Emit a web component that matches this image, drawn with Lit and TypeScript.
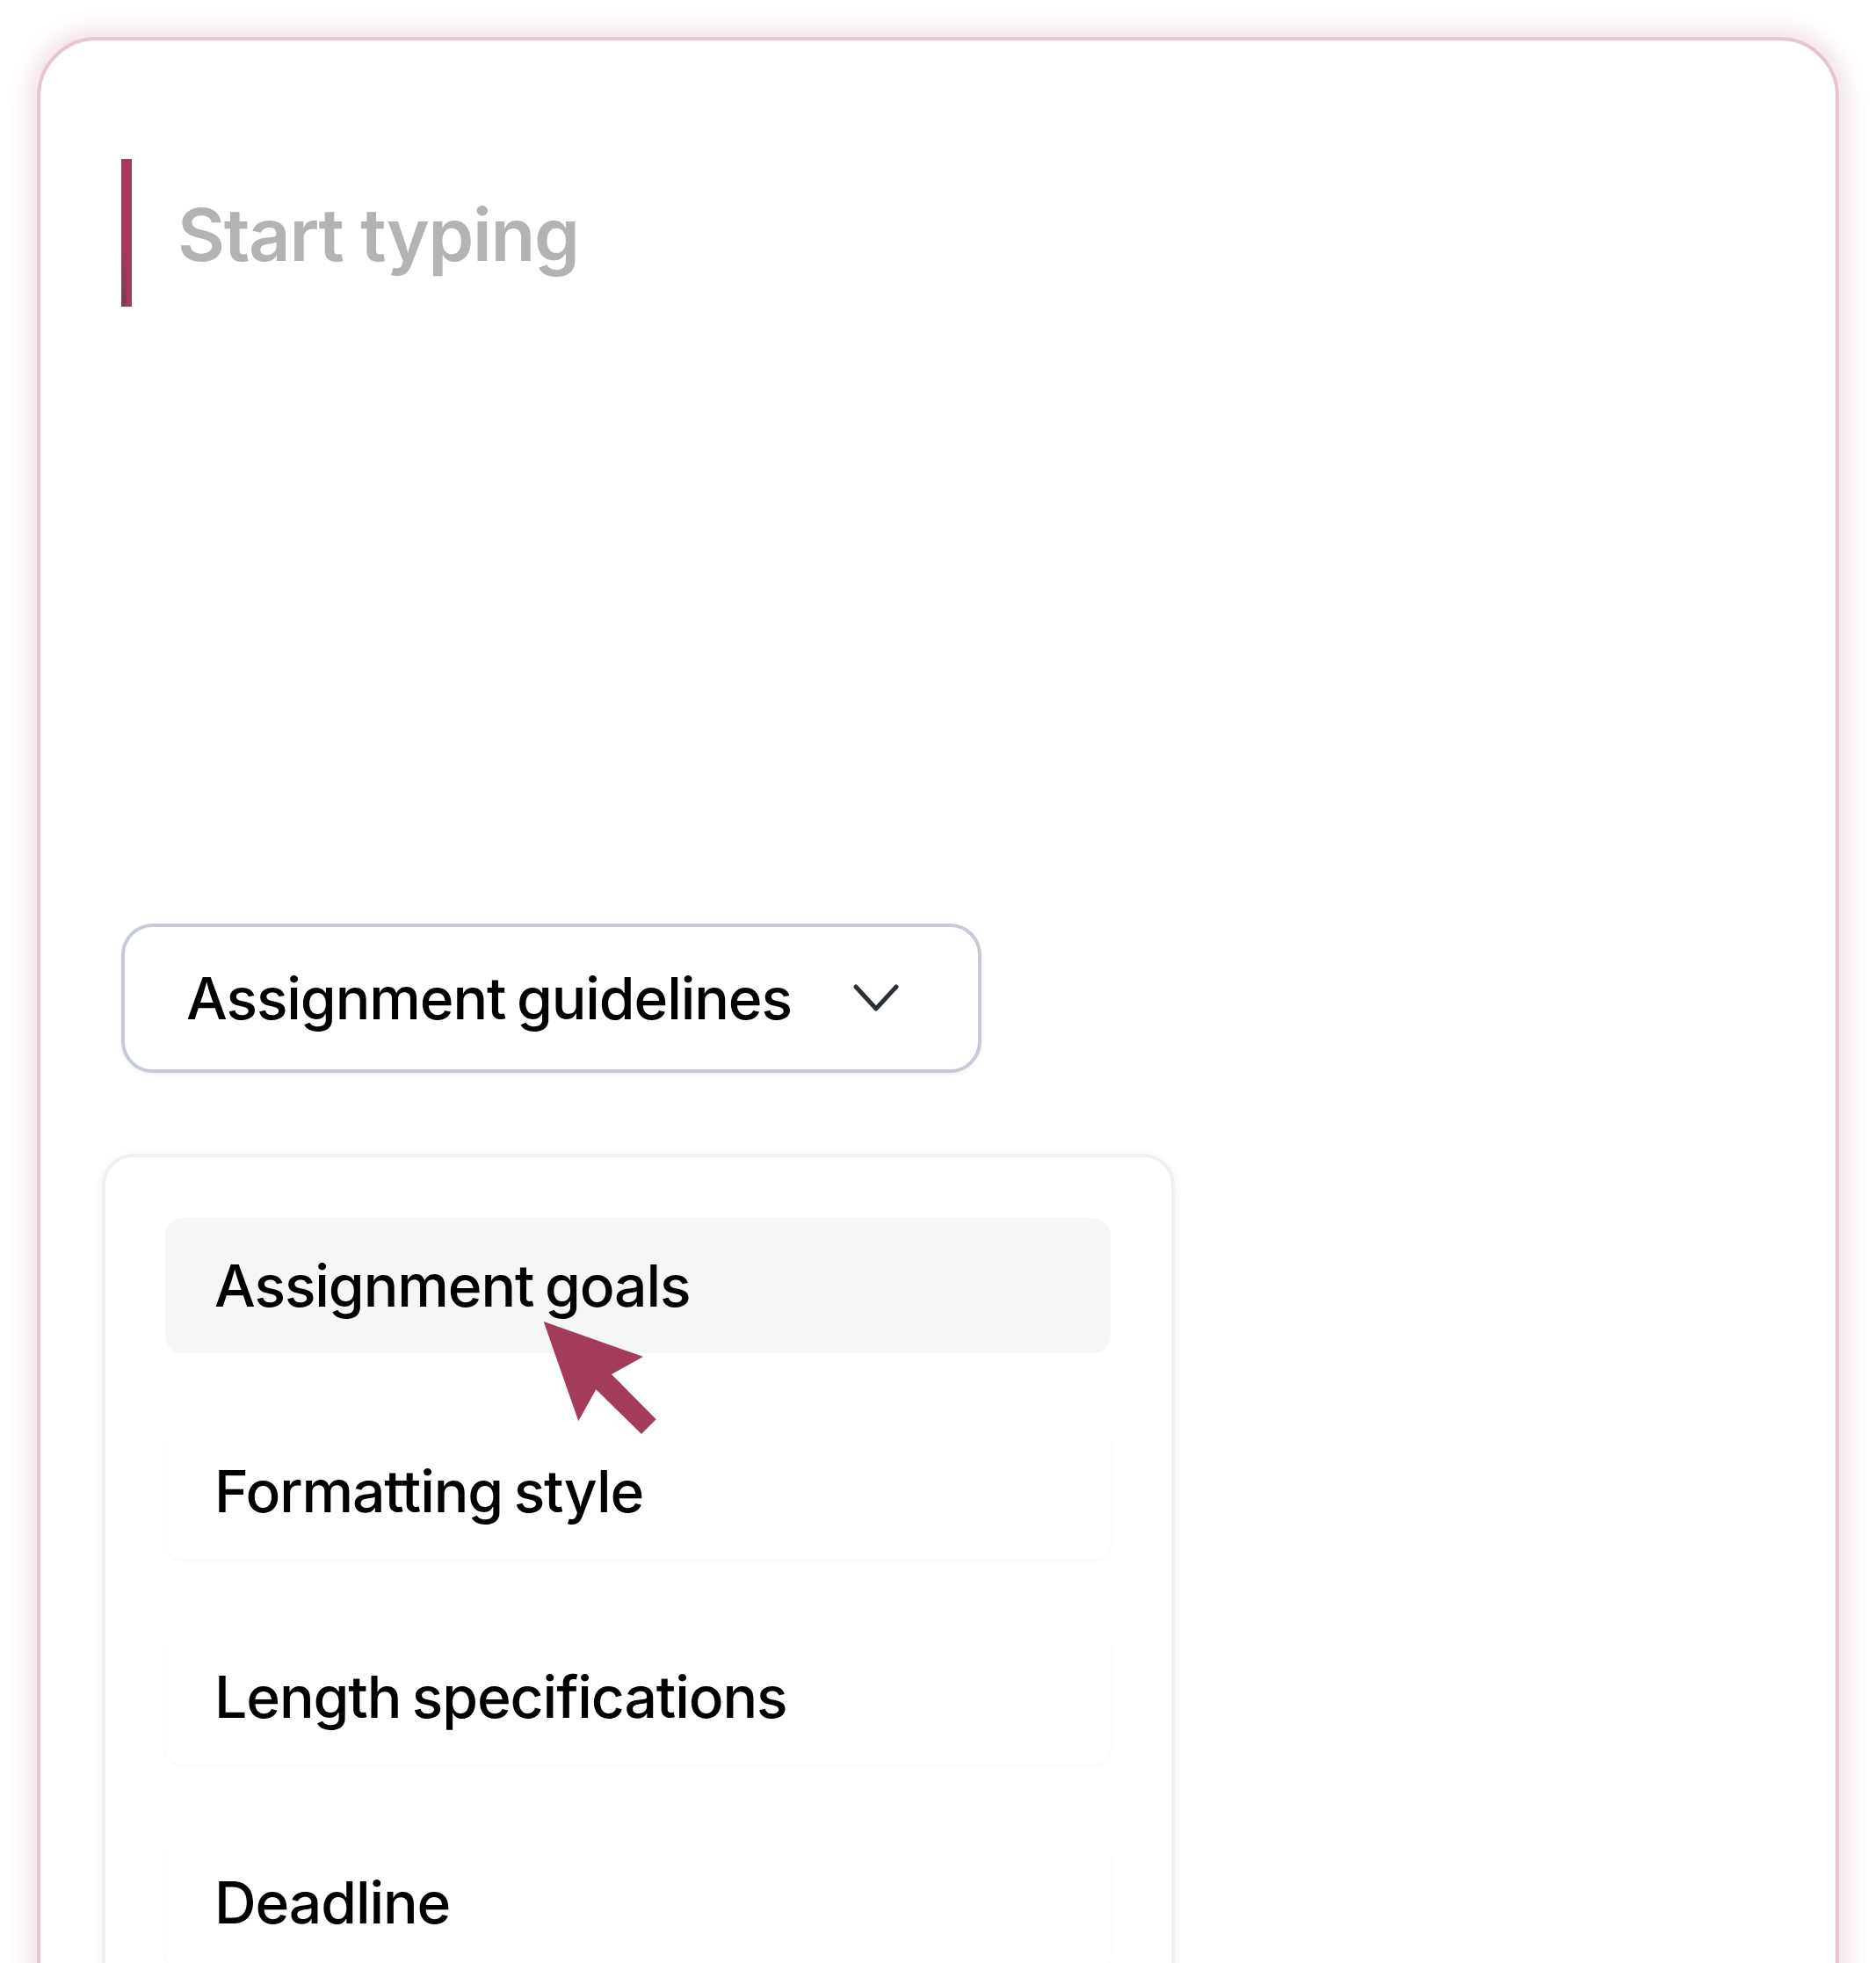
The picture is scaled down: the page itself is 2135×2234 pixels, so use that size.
import { LitElement, html, css, svg } from "lit";
import { customElement } from "lit/decorators.js";

@customElement("app-root")
export class AppRoot extends LitElement {
  static styles = css`
    :host { display: block; width: 2135px; height: 2234px; overflow: hidden; background: #fff; font-family: Inter, "Liberation Sans", sans-serif; position: relative; }
    .page { padding: 42px 42px 0; box-sizing: border-box; height: 2234px; }
    .panel { box-sizing: border-box; height: 2400px; border: 4px solid #e6c5d0; border-radius: 68px; background: #fff;
      box-shadow: 0 0 24px 10px rgba(163, 60, 90, 0.14); padding: 135px 92px 0; }
    .editor { display: flex; align-items: center; gap: 52px; height: 168px; margin-bottom: 702px; }
    .caret { width: 12px; height: 168px; flex: none; background: linear-gradient(to top, rgba(70,70,70,.5), rgba(70,70,70,0) 40%) left / 6px 100% no-repeat, #a33c5a; }
    .placeholder { font-size: 83px; font-weight: 600; color: #b3b3b3; line-height: 1; letter-spacing: -1.3px; padding-top: 4px; }
    .select { box-sizing: border-box; width: 979px; height: 170px; border: 4px solid #c5ccd8; border-radius: 36px; display: flex; align-items: center; justify-content: space-between; padding: 0 90px 0 70px; font-size: 66px; font-weight: 500; color: #000; letter-spacing: -1.1px; word-spacing: -4px; box-shadow: 0 2px 4px rgba(60,70,90,.08); }
    .select svg { width: 52px; height: 32px; display: block; }
    .menu { box-sizing: border-box; width: 1221px; margin: 92px 0 0 -22px; height: 1200px; border: 4px solid #eef0f3; border-radius: 36px; padding: 69px 68px 0; display: flex; flex-direction: column; gap: 80px; box-shadow: 0 2px 12px rgba(60,70,90,.07); }
    .item { width: 1076px; height: 154px; flex: none; box-sizing: border-box; border-radius: 20px; display: flex; align-items: center; padding-left: 56px; font-size: 66px; font-weight: 500; color: #000; letter-spacing: -1.1px; word-spacing: -4px; box-shadow: 0 2px 4px rgba(60,70,90,.04); }
    .item.active { background: #f5f6f8; box-shadow: none; }
    .cursor { position: absolute; left: 610px; top: 1496px; width: 150px; height: 150px; }
  `;

  render() {
    const items = ["Assignment goals", "Formatting style", "Length specifications", "Deadline"];
    return html`
      <div class="page">
        <div class="panel">
          <div class="editor"><div class="caret"></div><div class="placeholder">Start typing</div></div>
          <div class="select">
            <span>Assignment guidelines</span>
            <svg viewBox="0 0 52 32" fill="none" stroke="#2b2f36" stroke-width="5" stroke-linecap="round" stroke-linejoin="round"><path d="M3 3 L26 28 L49 3"></path></svg>
          </div>
          <div class="menu">
            ${items.map((t, i) => html`<div class="item ${i === 0 ? "active" : ""}">${t}</div>`)}
          </div>
        </div>
      </div>
      <svg class="cursor" viewBox="610 1496 150 150">${svg`<polygon fill="#a33c5a" points="618.7,1504 732,1544 696,1564 746.7,1615.3 730,1632 678.3,1581.3 658.3,1617.3"></polygon>`}</svg>
    `;
  }
}
